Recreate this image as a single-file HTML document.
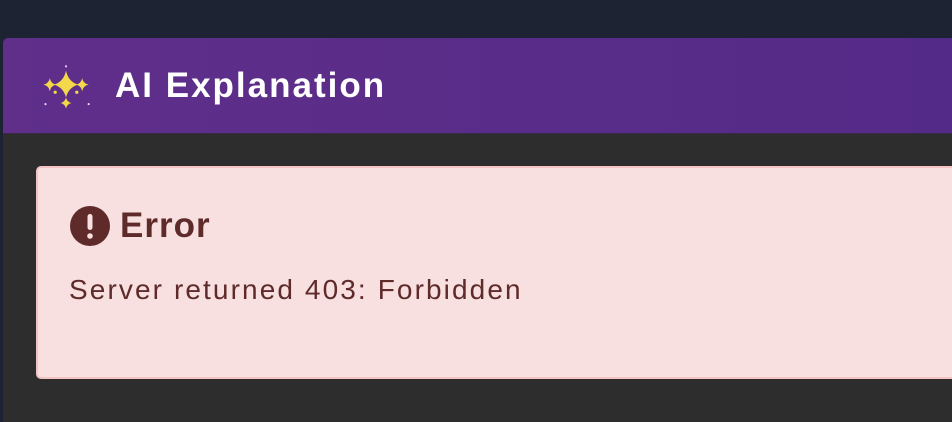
<!DOCTYPE html>
<html><head><style>
html,body{margin:0;padding:0;width:952px;height:422px;overflow:hidden;background:#1e2333;font-family:"Liberation Sans",sans-serif}
.panel{position:absolute;left:3px;top:38px;width:960px;height:384px;background:#2d2d2d;border-radius:5px 0 0 0;overflow:hidden}
.hdr{height:95px;background:linear-gradient(90deg,#5f2f8a,#542a88);border-bottom:1px solid #3a2a4a;position:relative}
.hdr .t{position:absolute;left:112px;top:28px;color:#fff;font-size:35px;font-weight:bold;letter-spacing:2px}
.box{position:absolute;left:33px;top:128px;width:940px;height:209px;background:#f8e0e0;border:2px solid #f4c4c4;border-radius:5px}
.err{position:absolute;left:32px;top:38px;color:#5e2a2a;font-size:35px;font-weight:bold;display:flex;align-items:center;letter-spacing:1px}
.msg{position:absolute;left:31px;top:106px;color:#5e2a2a;font-size:28px;letter-spacing:2.1px}
</style></head><body>
<div class="panel">
<div class="hdr">
<svg style="position:absolute;left:36px;top:26px" width="54" height="50" viewBox="0 0 50 46">
<g fill="#f5d84a">
<path d="M25 6 Q27 16 36 19 Q27 22 25 31 Q23 22 14 19 Q23 16 25 6Z"/>
<path d="M10 13 Q11 18 16 19 Q11 20 10 25 Q9 20 4 19 Q9 18 10 13Z"/>
<path d="M40 13 Q41 18 46 19 Q41 20 40 25 Q39 20 34 19 Q39 18 40 13Z"/>
<path d="M25 31 Q26 35 30 36 Q26 37 25 41 Q24 37 20 36 Q24 35 25 31Z"/>
<circle cx="25" cy="2" r="1" fill="#e8d8f0"/>
<circle cx="15" cy="26" r="1.5"/><circle cx="35" cy="26" r="1.5"/>
<circle cx="6" cy="37" r="1" fill="#e8d8f0"/><circle cx="46" cy="37" r="1" fill="#e8d8f0"/>
</g></svg>
<div class="t">AI Explanation</div>
</div>
<div class="box">
<div class="err"><svg width="40" height="40" viewBox="0 0 40 40" style="margin-right:10px"><circle cx="20" cy="20" r="20" fill="#5e2a2a"/><rect x="17.5" y="8" width="5" height="16" rx="2.5" fill="#f8e0e0"/><circle cx="20" cy="30" r="2.8" fill="#f8e0e0"/></svg>Error</div>
<div class="msg">Server returned 403: Forbidden</div>
</div>
</div>
</body></html>
